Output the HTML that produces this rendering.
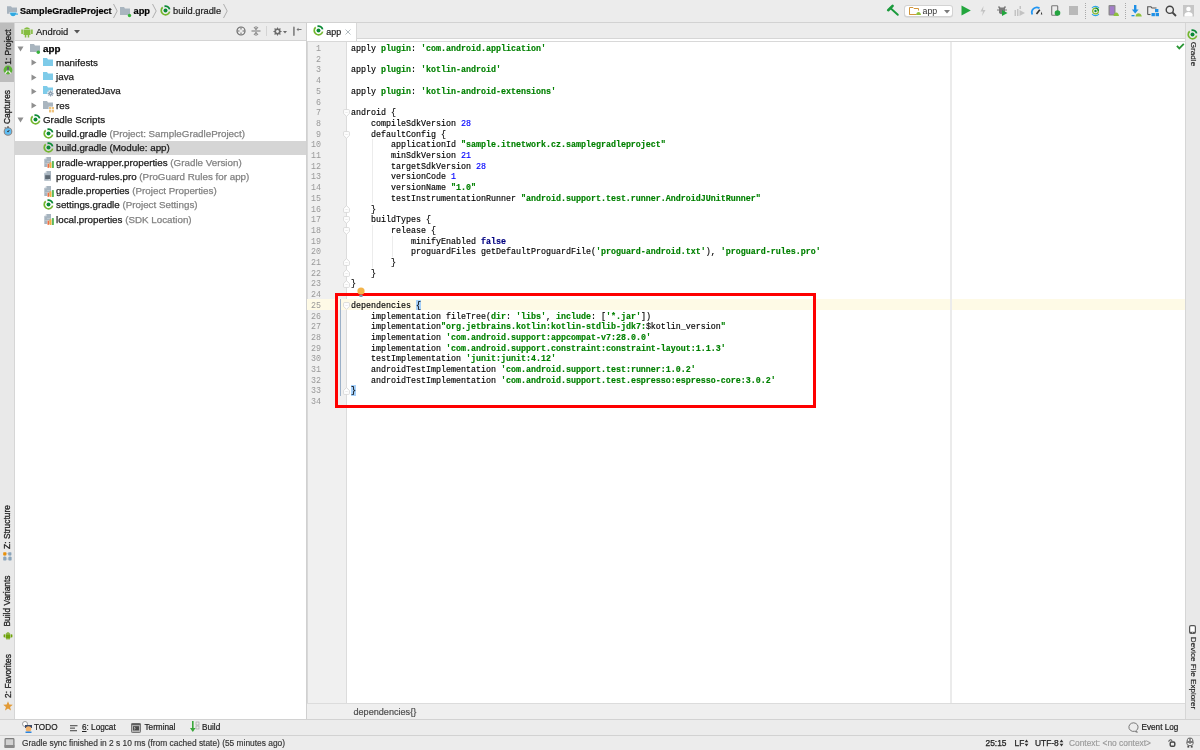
<!DOCTYPE html>
<html><head><meta charset="utf-8">
<style>
*{box-sizing:border-box}
html,body{margin:0;padding:0;width:1200px;height:750px;overflow:hidden;background:#ececec;font-family:"Liberation Sans",sans-serif;color:#1a1a1a}
.a{position:absolute}
svg{overflow:visible}
#top{left:0;top:0;width:1200px;height:23px;background:#ececec;border-bottom:1px solid #d2d2d2}
#lstrip{left:0;top:23px;width:15px;height:696px;background:#e9e9e9;border-right:1px solid #d6d6d6}
#rstrip{left:1185px;top:23px;width:15px;height:696px;background:#e9e9e9;border-left:1px solid #d6d6d6}
#proj{left:15px;top:23px;width:292px;height:696px;background:#fff;border-right:1px solid #d0d0d0}
#phdr{left:15px;top:23px;width:291px;height:18px;background:#ececec;border-bottom:1px solid #d4d4d4}
#tabs{left:307px;top:23px;width:878px;height:16px;background:#ececec;border-bottom:1px solid #d6d6d6}
#tabgap{left:307px;top:39px;width:878px;height:2px;background:#fff}
#editor{left:307px;top:41px;width:878px;height:662px;background:#fff;border-top:1px solid #d8d8d8}
#gutter{left:307px;top:42px;width:40px;height:661px;background:#f0f0f0;border-left:1px solid #d8d8d8;border-right:1px solid #dcdcdc}
#crumb{left:307px;top:703px;width:878px;height:16px;background:#efefef;border-top:1px solid #dcdcdc}
#bottom{left:0;top:719px;width:1200px;height:16px;background:#ececec;border-top:1px solid #d2d2d2}
#status{left:0;top:735px;width:1200px;height:15px;background:#ececec;border-top:1px solid #d2d2d2}
.code{font-family:"Liberation Mono",monospace;font-size:8.333px;white-space:pre;line-height:10.667px;color:#000;-webkit-text-stroke:0.15px currentColor}
.ln{left:307px;width:14px;text-align:right;color:#999;font-family:"Liberation Mono",monospace;font-size:8.333px;line-height:10.667px;white-space:pre}
.s{color:#008000;font-weight:bold}
.n{color:#0000ff}
.k{color:#000080;font-weight:bold}
.tb{font-size:9.3px;white-space:pre;line-height:12px;-webkit-text-stroke:0.2px currentColor}
.b{font-weight:bold}
.st{font-size:8.4px;white-space:pre;line-height:10px;color:#333;-webkit-text-stroke:0.15px currentColor}
.row{height:14px;font-size:9.8px;white-space:pre;line-height:14px;color:#1a1a1a;-webkit-text-stroke:0.25px currentColor}
.gr{color:#828282}
.blk{color:#000}
.vt{overflow:visible}
.vt span{position:absolute;left:50%;top:50%;transform:translate(-50%,-50%) rotate(-90deg);white-space:pre;font-size:8.4px;color:#1e1e1e;-webkit-text-stroke:0.3px #1e1e1e}
.vtr span{position:absolute;left:50%;top:50%;transform:translate(-50%,-50%) rotate(90deg);white-space:pre;font-size:8.4px;color:#1e1e1e;-webkit-text-stroke:0.15px #1e1e1e}
.br{}
</style></head><body>
<div id="wrap" style="position:absolute;left:0;top:0;width:1200px;height:750px;will-change:transform">
<div id="top" class="a"></div>
<div id="lstrip" class="a"></div>
<div id="proj" class="a"></div>
<div id="phdr" class="a"></div>
<div id="tabs" class="a"></div>
<div id="tabgap" class="a"></div>
<div id="editor" class="a"></div>
<div id="gutter" class="a"></div>
<div id="crumb" class="a"></div>
<div id="rstrip" class="a"></div>
<div id="bottom" class="a"></div>
<div id="status" class="a"></div>
<svg class="a" style="left:7px;top:6px" width="12" height="11" viewBox="0 0 12 11"><path d="M0 0.3 H4 L5 1.5 H10 V7.8 H0 Z" fill="#a7b3be"/><path d="M2.6 6 H9.6 Q9.6 10.6 6.1 10.6 Q2.6 10.6 2.6 6 Z" fill="#fff"/><path d="M3 6.4 H9.2 Q9.2 10.2 6.1 10.2 Q3 10.2 3 6.4 Z" fill="#2fa8e0"/><circle cx="10" cy="8.1" r="0.9" fill="#2fa8e0"/></svg>
<div class="a tb b" style="left:20px;top:4.6px;font-size:9.05px;color:#000">SampleGradleProject</div>
<svg class="a" style="left:113px;top:3px" width="5" height="16" viewBox="0 0 5 16"><path d="M0.5 1 L4.2 8 L0.5 15" fill="none" stroke="#a8a8a8" stroke-width="0.9"/></svg>
<svg class="a" style="left:120px;top:7px" width="12" height="10" viewBox="0 0 12 10">
<path d="M0 0 H4 L5 1.5 H10 V8 H0 Z" fill="#a9b5bf"/><circle cx="9.5" cy="8.5" r="1.7" fill="#36b33a"/></svg>
<div class="a tb b" style="left:133.5px;top:4.6px;color:#000">app</div>
<svg class="a" style="left:152px;top:3px" width="5" height="16" viewBox="0 0 5 16"><path d="M0.5 1 L4.2 8 L0.5 15" fill="none" stroke="#a8a8a8" stroke-width="0.9"/></svg>
<svg class="a" style="left:159.5px;top:5.1px" width="11" height="11" viewBox="0 0 11 11">
<path d="M4.46 1.33 A4.3 4.3 0 0 1 9.65 4.39" fill="none" stroke="#0b8a36" stroke-width="1.7"/>
<path d="M9.65 6.61 A4.3 4.3 0 1 1 2.68 2.25" fill="none" stroke="#72b62e" stroke-width="1.7"/>
<circle cx="5.5" cy="5.5" r="2" fill="#0b8a36"/></svg>
<div class="a tb" style="left:173px;top:4.6px">build.gradle</div>
<svg class="a" style="left:223px;top:3px" width="5" height="16" viewBox="0 0 5 16"><path d="M0.5 1 L4.2 8 L0.5 15" fill="none" stroke="#a8a8a8" stroke-width="0.9"/></svg>
<svg class="a" style="left:887px;top:5px" width="12" height="11" viewBox="0 0 12 11"><path d="M3.6 3.2 L10.8 9.8" stroke="#1b9a3c" stroke-width="1.9" stroke-linecap="round"/><path d="M1.2 5.2 L5.6 0.9" stroke="#1b9a3c" stroke-width="2.6" stroke-linecap="round"/></svg>
<div class="a" style="left:904px;top:4.5px;width:49px;height:12.5px;background:#fff;border:1px solid #d3d3d3;border-radius:3px;box-shadow:0 0.5px 0 #cfcfcf"></div>
<svg class="a" style="left:909px;top:7px" width="12" height="8" viewBox="0 0 12 8"><path d="M0.5 0.5 H4 L5 1.5 H9.5 V3.5 M7 7.5 H0.5 Z" fill="none" stroke="#d1953c" stroke-width="1"/><path d="M0.5 0.5 V7.5" stroke="#d1953c"/><path d="M7 8 Q7.5 5 9.5 5 Q11.5 5 12 8 Z" fill="#8ec13e"/></svg>
<div class="a tb" style="left:922.5px;top:5px;color:#333;font-size:8.8px;-webkit-text-stroke:0">app</div>
<svg class="a" style="left:943.5px;top:9.5px" width="6" height="4" viewBox="0 0 6 4"><path d="M0 0 H6 L3 3.5 Z" fill="#7b7b7b"/></svg>
<svg class="a" style="left:961px;top:5px" width="10" height="11" viewBox="0 0 10 11"><path d="M0.5 0.5 L9.8 5.5 L0.5 10.5 Z" fill="#22a63d"/></svg>
<svg class="a" style="left:980px;top:5.5px" width="6" height="10" viewBox="0 0 6 10"><path d="M3.5 0 L0.5 5.5 H3 L2 10 L5.5 4 H3 Z" fill="#c3c3c3"/></svg>
<svg class="a" style="left:997px;top:5px" width="11" height="11" viewBox="0 0 11 11"><path d="M2 1 L3.5 2.5 H6.5 L8 1 L9 2 L8 3.5 V8 Q5 10.5 2 8 V3.5 L1 2 Z" fill="#7b7b7b"/><rect x="0" y="4.5" width="10" height="1" fill="#7b7b7b"/><path d="M5 5 L10.5 8 L5 11 Z" fill="#22a63d"/></svg>
<svg class="a" style="left:1014px;top:5.5px" width="11" height="11" viewBox="0 0 11 11"><rect x="0.5" y="4" width="1.5" height="6" fill="#c3c3c3"/><rect x="3" y="3" width="1.5" height="7" fill="#c3c3c3"/><rect x="5.5" y="0" width="1.5" height="3" fill="#c3c3c3"/><path d="M5.5 4 L11 7 L5.5 10 Z" fill="#c3c3c3"/></svg>
<svg class="a" style="left:1031px;top:6px" width="12" height="9" viewBox="0 0 12 9"><path d="M1.3 8.5 A5 5 0 0 1 8.5 2.2" fill="none" stroke="#2196f3" stroke-width="1.8"/><path d="M5.5 8 L8.8 3.8" stroke="#333" stroke-width="1.6"/><path d="M10.5 5.5 L11.3 8.5 H9.8 Z" fill="#333"/></svg>
<svg class="a" style="left:1051px;top:5px" width="10" height="11" viewBox="0 0 10 11"><rect x="0.7" y="0.7" width="6" height="9.6" rx="0.8" fill="none" stroke="#777" stroke-width="1.1"/><circle cx="6.5" cy="8" r="2.8" fill="#23a43f"/></svg>
<div class="a" style="left:1069px;top:6px;width:8.5px;height:8.5px;background:#b9b9b9"></div>
<div class="a" style="left:1084.5px;top:3px;width:1px;height:16px;background:repeating-linear-gradient(#aaa 0 1px,transparent 1px 2.2px)"></div>
<svg class="a" style="left:1090px;top:4.5px" width="11" height="12" viewBox="0 0 22 24"><path d="M4 6 A9 9 0 0 1 18 6" fill="none" stroke="#2aa6e8" stroke-width="2.2"/><path d="M4 18 A9 9 0 0 0 18 18" fill="none" stroke="#2aa6e8" stroke-width="2.2"/><circle cx="11" cy="12" r="5.8" fill="none" stroke="#8ab92f" stroke-width="2.6"/><path d="M11 6.2 A5.8 5.8 0 0 1 16.8 12" fill="none" stroke="#12913e" stroke-width="2.6"/><circle cx="11" cy="12" r="2.4" fill="#12913e"/></svg>
<svg class="a" style="left:1107.5px;top:5px" width="11" height="11" viewBox="0 0 11 11"><rect x="0.5" y="0" width="7" height="10.5" rx="1" fill="#8a8a8a"/><rect x="1.8" y="1.3" width="4.5" height="8" fill="#a37cc9"/><path d="M5.5 11 Q6 7.5 8.2 7.5 Q10.5 7.5 11 11 Z" fill="#8ec13e"/></svg>
<div class="a" style="left:1124.5px;top:3px;width:1px;height:16px;background:repeating-linear-gradient(#aaa 0 1px,transparent 1px 2.2px)"></div>
<svg class="a" style="left:1130.5px;top:5px" width="11" height="12" viewBox="0 0 11 12"><rect x="3" y="0" width="2.4" height="5" fill="#1e90e6"/><path d="M0.8 4.5 H7.6 L4.2 8.5 Z" fill="#1e90e6"/><rect x="0.5" y="10" width="3" height="1.3" fill="#1e90e6"/><path d="M4.5 11.5 Q5 8.2 7.5 8.2 Q10 8.2 10.8 11.5 Z" fill="#8ec13e"/></svg>
<svg class="a" style="left:1147px;top:5.5px" width="13" height="11" viewBox="0 0 13 11"><path d="M0.7 8.5 V0.8 H4 L5 2 H9.5" fill="none" stroke="#555" stroke-width="1.1"/><path d="M0.7 8.5 H3.5" stroke="#555" stroke-width="1.1"/><rect x="8" y="3" width="3.4" height="3.2" fill="#1e90e6"/><rect x="4.5" y="7" width="3.4" height="3.2" fill="#1e90e6"/><rect x="8.6" y="7" width="3.4" height="3.2" fill="#1e90e6"/></svg>
<svg class="a" style="left:1165px;top:5px" width="12" height="12" viewBox="0 0 12 12"><circle cx="4.8" cy="4.8" r="3.6" fill="none" stroke="#444" stroke-width="1.4"/><path d="M7.5 7.5 L11 11" stroke="#444" stroke-width="1.8"/></svg>
<svg class="a" style="left:1183px;top:5px" width="11" height="12" viewBox="0 0 11 12"><rect width="11" height="11.5" fill="#c6c6c6"/><circle cx="5.5" cy="4" r="2.3" fill="#fff"/><path d="M1.5 11.5 V9.5 Q2 7 5.5 7 Q9 7 9.5 9.5 V11.5 Z" fill="#fff"/></svg>
<div class="a" style="left:0;top:23px;width:14px;height:59px;background:#bdbdbd"></div>
<div class="a vt" style="left:2.8px;top:28px;width:10px;height:38px"><span>1: Project</span></div>
<svg class="a" style="left:2.5px;top:64.5px" width="10" height="10" viewBox="0 0 10 10"><circle cx="5" cy="5" r="4.4" fill="#5cb335"/><path d="M2.2 8.6 L5 4.8 L7.8 8.6" stroke="#f2f2f2" stroke-width="1.1" fill="none"/><rect x="4.1" y="1.6" width="1.8" height="4.2" rx="0.9" fill="#5b5b6b"/></svg>
<div class="a vt" style="left:2.3px;top:88.6px;width:10px;height:36px"><span>Captures</span></div>
<svg class="a" style="left:2.5px;top:126px" width="10" height="10" viewBox="0 0 10 10"><circle cx="5" cy="5.5" r="3.8" fill="#5fbdf3" stroke="#8c8480" stroke-width="1.1"/><rect x="4.2" y="0.3" width="1.6" height="1.5" fill="#555"/><path d="M1 2.2 L2.3 1 L3 2" fill="#666"/><path d="M5 5.5 L6.5 4" stroke="#333" stroke-width="0.9"/><circle cx="5" cy="5.5" r="0.8" fill="#333"/></svg>
<div class="a vt" style="left:2px;top:505px;width:10px;height:44px"><span>Z: Structure</span></div>
<svg class="a" style="left:3px;top:551.5px" width="9" height="9" viewBox="0 0 9 9"><path d="M1.7 1.7 H7 M1.7 1.7 V7 M7 1.7 V7 M1.7 7 H7" stroke="#b9c8d5" stroke-width="0.8"/><rect x="0.2" y="0.2" width="3.2" height="3.2" rx="0.6" fill="#e8900a"/><rect x="5.2" y="0.2" width="3.2" height="3.2" rx="0.6" fill="#8aa4ba"/><rect x="0.2" y="4.8" width="3.2" height="3.6" rx="0.6" fill="#8aa4ba"/><rect x="5.4" y="4.8" width="3.2" height="3.6" rx="0.6" fill="#8aa4ba"/></svg>
<div class="a vt" style="left:2px;top:576px;width:10px;height:50px"><span>Build Variants</span></div>
<svg class="a" style="left:2.5px;top:629.5px" width="10" height="10" viewBox="0 0 10 10"><path d="M2.6 3.8 Q5 0.6 7.4 3.8 Z" fill="#6fa30a"/><rect x="2.6" y="4.2" width="4.8" height="4" fill="#6fa30a"/><rect x="0.6" y="4.2" width="1.5" height="3.2" rx="0.7" fill="#6fa30a"/><rect x="7.9" y="4.2" width="1.5" height="3.2" rx="0.7" fill="#6fa30a"/><rect x="3.3" y="7.5" width="1.4" height="2" rx="0.6" fill="#6fa30a"/><rect x="5.3" y="7.5" width="1.4" height="2" rx="0.6" fill="#6fa30a"/></svg>
<div class="a vt" style="left:2.5px;top:655px;width:10px;height:42px"><span>2: Favorites</span></div>
<svg class="a" style="left:2.5px;top:700.5px" width="10" height="10" viewBox="0 0 10 10"><path d="M5 0.3 L6.3 3.6 L9.8 3.8 L7.1 6 L8 9.5 L5 7.5 L2 9.5 L2.9 6 L0.2 3.8 L3.7 3.6 Z" fill="#e29a35"/></svg>
<svg class="a" style="left:21px;top:25px" width="12" height="13" viewBox="0 0 12 13"><path d="M2.5 4.5 H9.5 V10 H2.5 Z M2.8 4 Q6 0.5 9.2 4 Z" fill="#84bd3f"/><rect x="0.3" y="4.5" width="1.6" height="4.5" fill="#84bd3f"/><rect x="10.1" y="4.5" width="1.6" height="4.5" fill="#84bd3f"/><rect x="3.8" y="9.5" width="1.5" height="3" fill="#84bd3f"/><rect x="6.7" y="9.5" width="1.5" height="3" fill="#84bd3f"/></svg>
<div class="a tb" style="left:36px;top:26px;font-size:9.4px;color:#222">Android</div>
<svg class="a" style="left:73.5px;top:30px" width="6" height="4" viewBox="0 0 6 4"><path d="M0 0 H6 L3 3.5 Z" fill="#555"/></svg>
<svg class="a" style="left:235.5px;top:26px" width="10" height="10" viewBox="0 0 10 10"><circle cx="5" cy="5" r="4" fill="none" stroke="#6d6d6d" stroke-width="1.2"/><path d="M5 1.5 V3.5 M5 6.5 V8.5 M1.5 5 H3.5 M6.5 5 H8.5" stroke="#6d6d6d" stroke-width="1"/></svg>
<svg class="a" style="left:251px;top:26px" width="10" height="10" viewBox="0 0 10 10"><path d="M0.5 5 H9.5" stroke="#8a8a8a" stroke-width="1.2"/><path d="M3 1 L5 3.5 L7 1 M3 9 L5 6.5 L7 9" stroke="#8a8a8a" stroke-width="1.1" fill="none"/><path d="M5 0 V3 M5 7 V10" stroke="#8a8a8a" stroke-width="1"/></svg>
<div class="a" style="left:266px;top:26px;width:1px;height:10px;background:#d4d4d4"></div>
<svg class="a" style="left:272.5px;top:26.5px" width="9" height="9" viewBox="0 0 10 10"><path d="M5 0 L6 2 L8.5 1.5 L8 4 L10 5 L8 6 L8.5 8.5 L6 8 L5 10 L4 8 L1.5 8.5 L2 6 L0 5 L2 4 L1.5 1.5 L4 2 Z" fill="#6a6a6a"/><circle cx="5" cy="5" r="1.6" fill="#ececec"/></svg>
<svg class="a" style="left:283px;top:30.5px" width="4" height="3" viewBox="0 0 4 3"><path d="M0 0 H4 L2 2.5 Z" fill="#6a6a6a"/></svg>
<svg class="a" style="left:291.5px;top:26px" width="10" height="11" viewBox="0 0 10 11"><rect x="1" y="0.5" width="1.8" height="9.5" rx="0.9" fill="#8a8a8a"/><path d="M4.5 3.5 L6.5 1.8 V5.2 Z" fill="#777"/><rect x="6" y="3" width="3.5" height="1" fill="#777"/></svg>
<div class="a" style="left:15px;top:140.75px;width:291px;height:14px;background:#d5d5d5"></div>
<svg class="a" style="left:17px;top:45.5px" width="7" height="6" viewBox="0 0 7 6"><path d="M0.5 0.5 H6.5 L3.5 5.5 Z" fill="#8f8f8f"/></svg>
<svg class="a" style="left:30px;top:44.0px" width="12" height="10" viewBox="0 0 12 10">
<path d="M0 0 H4 L5 1.5 H10 V8 H0 Z" fill="#a9b5bf"/><circle cx="8.3" cy="8.2" r="1.7" fill="#36b33a"/></svg>
<div class="a row b blk" style="left:43px;top:41.50px">app<span class="gr"></span></div>
<svg class="a" style="left:30.5px;top:59.45px" width="6" height="7" viewBox="0 0 6 7"><path d="M0.5 0.5 V6.5 L5.5 3.5 Z" fill="#8f8f8f"/></svg>
<svg class="a" style="left:43px;top:57.85px" width="12" height="10" viewBox="0 0 12 10">
<path d="M0 0 H4 L5 1.5 H10 V8 H0 Z" fill="#7ecbe9"/></svg>
<div class="a row" style="left:56px;top:55.75px">manifests<span class="gr"></span></div>
<svg class="a" style="left:30.5px;top:73.7px" width="6" height="7" viewBox="0 0 6 7"><path d="M0.5 0.5 V6.5 L5.5 3.5 Z" fill="#8f8f8f"/></svg>
<svg class="a" style="left:43px;top:72.1px" width="12" height="10" viewBox="0 0 12 10">
<path d="M0 0 H4 L5 1.5 H10 V8 H0 Z" fill="#7ecbe9"/></svg>
<div class="a row" style="left:56px;top:70.00px">java<span class="gr"></span></div>
<svg class="a" style="left:30.5px;top:87.95px" width="6" height="7" viewBox="0 0 6 7"><path d="M0.5 0.5 V6.5 L5.5 3.5 Z" fill="#8f8f8f"/></svg>
<svg class="a" style="left:43px;top:86.25px" width="12" height="10" viewBox="0 0 12 10">
<path d="M0 0 H4 L5 1.5 H10 V8 H0 Z" fill="#7ecbe9"/><circle cx="7.6" cy="7.6" r="3.4" fill="#fff"/><path d="M7.6 4.6 V10.6 M4.6 7.6 H10.6 M5.5 5.5 L9.7 9.7 M9.7 5.5 L5.5 9.7" stroke="#8fa3b5" stroke-width="1.1"/><circle cx="7.6" cy="7.6" r="1.7" fill="#8fa3b5"/><circle cx="7.6" cy="7.6" r="0.7" fill="#dde6ee"/></svg>
<div class="a row" style="left:56px;top:84.25px">generatedJava<span class="gr"></span></div>
<svg class="a" style="left:30.5px;top:102.2px" width="6" height="7" viewBox="0 0 6 7"><path d="M0.5 0.5 V6.5 L5.5 3.5 Z" fill="#8f8f8f"/></svg>
<svg class="a" style="left:43px;top:100.5px" width="12" height="10" viewBox="0 0 12 10">
<path d="M0 0 H4 L5 1.5 H10 V8 H0 Z" fill="#a9b5bf"/><rect x="5.6" y="5.6" width="5.6" height="6" fill="#fff"/><rect x="6" y="6" width="2.2" height="2.4" fill="#efc27c"/><rect x="8.8" y="6" width="2.2" height="2.4" fill="#efc27c"/><rect x="6" y="9" width="2.2" height="2.4" fill="#efc27c"/><rect x="8.8" y="9" width="2.2" height="2.4" fill="#efc27c"/></svg>
<div class="a row" style="left:56px;top:98.50px">res<span class="gr"></span></div>
<svg class="a" style="left:17px;top:116.75px" width="7" height="6" viewBox="0 0 7 6"><path d="M0.5 0.5 H6.5 L3.5 5.5 Z" fill="#8f8f8f"/></svg>
<svg class="a" style="left:29.5px;top:113.75px" width="11" height="11" viewBox="0 0 11 11">
<path d="M4.46 1.33 A4.3 4.3 0 0 1 9.65 4.39" fill="none" stroke="#0b8a36" stroke-width="1.7"/>
<path d="M9.65 6.61 A4.3 4.3 0 1 1 2.68 2.25" fill="none" stroke="#72b62e" stroke-width="1.7"/>
<circle cx="5.5" cy="5.5" r="2" fill="#0b8a36"/></svg>
<div class="a row" style="left:43px;top:112.75px">Gradle Scripts<span class="gr"></span></div>
<svg class="a" style="left:42.5px;top:128.0px" width="11" height="11" viewBox="0 0 11 11">
<path d="M4.46 1.33 A4.3 4.3 0 0 1 9.65 4.39" fill="none" stroke="#0b8a36" stroke-width="1.7"/>
<path d="M9.65 6.61 A4.3 4.3 0 1 1 2.68 2.25" fill="none" stroke="#72b62e" stroke-width="1.7"/>
<circle cx="5.5" cy="5.5" r="2" fill="#0b8a36"/></svg>
<div class="a row" style="left:56px;top:127.00px">build.gradle<span class="gr"> (Project: SampleGradleProject)</span></div>
<svg class="a" style="left:42.5px;top:142.25px" width="11" height="11" viewBox="0 0 11 11">
<path d="M4.46 1.33 A4.3 4.3 0 0 1 9.65 4.39" fill="none" stroke="#0b8a36" stroke-width="1.7"/>
<path d="M9.65 6.61 A4.3 4.3 0 1 1 2.68 2.25" fill="none" stroke="#72b62e" stroke-width="1.7"/>
<circle cx="5.5" cy="5.5" r="2" fill="#0b8a36"/></svg>
<div class="a row" style="left:56px;top:141.25px">build.gradle (Module: app)<span class="gr"></span></div>
<svg class="a" style="left:44.1px;top:157.0px" width="11" height="12" viewBox="0 0 11 12">
<path d="M0.3 2.2 L2.5 0 H7 V10 H0.3 Z" fill="#a7b4bf"/><path d="M0.3 2.2 H2.5 V0 Z" fill="#e4e8ec"/>
<rect x="3" y="4" width="3.5" height="0.6" fill="#c9d2d9"/><rect x="1.2" y="6" width="3" height="0.6" fill="#c9d2d9"/>
<rect x="3.4" y="6.6" width="1.8" height="4.4" rx="0.5" fill="#f05a28" stroke="#fff" stroke-width="0.4"/><rect x="5.6" y="5.3" width="1.9" height="5.7" rx="0.5" fill="#f8b140"/><rect x="7.9" y="3.9" width="2" height="7.1" rx="0.5" fill="#5cb85c"/></svg>
<div class="a row" style="left:56px;top:155.50px">gradle-wrapper.properties<span class="gr"> (Gradle Version)</span></div>
<svg class="a" style="left:44.1px;top:171.25px" width="11" height="12" viewBox="0 0 11 12">
<path d="M0.3 2.2 L2.5 0 H7 V9.8 H0.3 Z" fill="#a7b4bf"/><path d="M0.3 2.2 H2.5 V0 Z" fill="#e4e8ec"/>
<rect x="1.2" y="4.2" width="5" height="3.8" fill="#5d6872"/><rect x="4.5" y="8.3" width="1.5" height="0.9" fill="#e6e6e6"/></svg>
<div class="a row" style="left:56px;top:169.75px">proguard-rules.pro<span class="gr"> (ProGuard Rules for app)</span></div>
<svg class="a" style="left:44.1px;top:185.5px" width="11" height="12" viewBox="0 0 11 12">
<path d="M0.3 2.2 L2.5 0 H7 V10 H0.3 Z" fill="#a7b4bf"/><path d="M0.3 2.2 H2.5 V0 Z" fill="#e4e8ec"/>
<rect x="3" y="4" width="3.5" height="0.6" fill="#c9d2d9"/><rect x="1.2" y="6" width="3" height="0.6" fill="#c9d2d9"/>
<rect x="3.4" y="6.6" width="1.8" height="4.4" rx="0.5" fill="#f05a28" stroke="#fff" stroke-width="0.4"/><rect x="5.6" y="5.3" width="1.9" height="5.7" rx="0.5" fill="#f8b140"/><rect x="7.9" y="3.9" width="2" height="7.1" rx="0.5" fill="#5cb85c"/></svg>
<div class="a row" style="left:56px;top:184.00px">gradle.properties<span class="gr"> (Project Properties)</span></div>
<svg class="a" style="left:42.5px;top:199.25px" width="11" height="11" viewBox="0 0 11 11">
<path d="M4.46 1.33 A4.3 4.3 0 0 1 9.65 4.39" fill="none" stroke="#0b8a36" stroke-width="1.7"/>
<path d="M9.65 6.61 A4.3 4.3 0 1 1 2.68 2.25" fill="none" stroke="#72b62e" stroke-width="1.7"/>
<circle cx="5.5" cy="5.5" r="2" fill="#0b8a36"/></svg>
<div class="a row" style="left:56px;top:198.25px">settings.gradle<span class="gr"> (Project Settings)</span></div>
<svg class="a" style="left:44.1px;top:214.0px" width="11" height="12" viewBox="0 0 11 12">
<path d="M0.3 2.2 L2.5 0 H7 V10 H0.3 Z" fill="#a7b4bf"/><path d="M0.3 2.2 H2.5 V0 Z" fill="#e4e8ec"/>
<rect x="3" y="4" width="3.5" height="0.6" fill="#c9d2d9"/><rect x="1.2" y="6" width="3" height="0.6" fill="#c9d2d9"/>
<rect x="3.4" y="6.6" width="1.8" height="4.4" rx="0.5" fill="#f05a28" stroke="#fff" stroke-width="0.4"/><rect x="5.6" y="5.3" width="1.9" height="5.7" rx="0.5" fill="#f8b140"/><rect x="7.9" y="3.9" width="2" height="7.1" rx="0.5" fill="#5cb85c"/></svg>
<div class="a row" style="left:56px;top:212.50px">local.properties<span class="gr"> (SDK Location)</span></div>
<div class="a" style="left:307px;top:23px;width:50px;height:18px;background:#fff;border-right:1px solid #d8d8d8"></div>
<svg class="a" style="left:313.0px;top:25.0px" width="11" height="11" viewBox="0 0 11 11">
<path d="M4.46 1.33 A4.3 4.3 0 0 1 9.65 4.39" fill="none" stroke="#0b8a36" stroke-width="1.7"/>
<path d="M9.65 6.61 A4.3 4.3 0 1 1 2.68 2.25" fill="none" stroke="#72b62e" stroke-width="1.7"/>
<circle cx="5.5" cy="5.5" r="2" fill="#0b8a36"/></svg>
<div class="a tb" style="left:326.3px;top:25.8px;color:#222;font-size:8.9px">app</div>
<svg class="a" style="left:345px;top:28.5px" width="6" height="6" viewBox="0 0 6 6"><path d="M0.5 0.5 L5.5 5.5 M5.5 0.5 L0.5 5.5" stroke="#aab4ba" stroke-width="0.9"/></svg>
<div class="a" style="left:307px;top:298.9px;width:878px;height:11px;background:#fefae6"></div>
<div class="a" style="left:416px;top:299.70px;width:5px;height:10.70px;background:#a6d1fb"></div>
<div class="a" style="left:351px;top:385.30px;width:5px;height:10.70px;background:#a6d1fb"></div>
<div class="a" style="left:950.4px;top:42px;width:1.2px;height:661px;background:#ebebeb"></div>
<div class="a ln" style="top:44.00px">1</div>
<div class="a ln" style="top:54.70px">2</div>
<div class="a ln" style="top:65.40px">3</div>
<div class="a ln" style="top:76.10px">4</div>
<div class="a ln" style="top:86.80px">5</div>
<div class="a ln" style="top:97.50px">6</div>
<div class="a ln" style="top:108.20px">7</div>
<div class="a ln" style="top:118.90px">8</div>
<div class="a ln" style="top:129.60px">9</div>
<div class="a ln" style="top:140.30px">10</div>
<div class="a ln" style="top:151.00px">11</div>
<div class="a ln" style="top:161.70px">12</div>
<div class="a ln" style="top:172.40px">13</div>
<div class="a ln" style="top:183.10px">14</div>
<div class="a ln" style="top:193.80px">15</div>
<div class="a ln" style="top:204.50px">16</div>
<div class="a ln" style="top:215.20px">17</div>
<div class="a ln" style="top:225.90px">18</div>
<div class="a ln" style="top:236.60px">19</div>
<div class="a ln" style="top:247.30px">20</div>
<div class="a ln" style="top:258.00px">21</div>
<div class="a ln" style="top:268.70px">22</div>
<div class="a ln" style="top:279.40px">23</div>
<div class="a ln" style="top:290.10px">24</div>
<div class="a ln" style="top:300.80px">25</div>
<div class="a ln" style="top:311.50px">26</div>
<div class="a ln" style="top:322.20px">27</div>
<div class="a ln" style="top:332.90px">28</div>
<div class="a ln" style="top:343.60px">29</div>
<div class="a ln" style="top:354.30px">30</div>
<div class="a ln" style="top:365.00px">31</div>
<div class="a ln" style="top:375.70px">32</div>
<div class="a ln" style="top:386.40px">33</div>
<div class="a ln" style="top:397.10px">34</div>
<div class="a code" style="left:351px;top:44.00px">apply <span class="s">plugin</span>: <span class="s">'com.android.application'</span></div>
<div class="a code" style="left:351px;top:54.70px"></div>
<div class="a code" style="left:351px;top:65.40px">apply <span class="s">plugin</span>: <span class="s">'kotlin-android'</span></div>
<div class="a code" style="left:351px;top:76.10px"></div>
<div class="a code" style="left:351px;top:86.80px">apply <span class="s">plugin</span>: <span class="s">'kotlin-android-extensions'</span></div>
<div class="a code" style="left:351px;top:97.50px"></div>
<div class="a code" style="left:351px;top:108.20px">android {</div>
<div class="a code" style="left:351px;top:118.90px">    compileSdkVersion <span class="n">28</span></div>
<div class="a code" style="left:351px;top:129.60px">    defaultConfig {</div>
<div class="a code" style="left:351px;top:140.30px">        applicationId <span class="s">"sample.itnetwork.cz.samplegradleproject"</span></div>
<div class="a code" style="left:351px;top:151.00px">        minSdkVersion <span class="n">21</span></div>
<div class="a code" style="left:351px;top:161.70px">        targetSdkVersion <span class="n">28</span></div>
<div class="a code" style="left:351px;top:172.40px">        versionCode <span class="n">1</span></div>
<div class="a code" style="left:351px;top:183.10px">        versionName <span class="s">"1.0"</span></div>
<div class="a code" style="left:351px;top:193.80px">        testInstrumentationRunner <span class="s">"android.support.test.runner.AndroidJUnitRunner"</span></div>
<div class="a code" style="left:351px;top:204.50px">    }</div>
<div class="a code" style="left:351px;top:215.20px">    buildTypes {</div>
<div class="a code" style="left:351px;top:225.90px">        release {</div>
<div class="a code" style="left:351px;top:236.60px">            minifyEnabled <span class="k">false</span></div>
<div class="a code" style="left:351px;top:247.30px">            proguardFiles getDefaultProguardFile(<span class="s">'proguard-android.txt'</span>), <span class="s">'proguard-rules.pro'</span></div>
<div class="a code" style="left:351px;top:258.00px">        }</div>
<div class="a code" style="left:351px;top:268.70px">    }</div>
<div class="a code" style="left:351px;top:279.40px">}</div>
<div class="a code" style="left:351px;top:290.10px"></div>
<div class="a code" style="left:351px;top:300.80px">dependencies <span class="br">{</span></div>
<div class="a code" style="left:351px;top:311.50px">    implementation fileTree(<span class="s">dir</span>: <span class="s">'libs'</span>, <span class="s">include</span>: [<span class="s">'*.jar'</span>])</div>
<div class="a code" style="left:351px;top:322.20px">    implementation<span class="s">"org.jetbrains.kotlin:kotlin-stdlib-jdk7:</span>$kotlin_version<span class="s">"</span></div>
<div class="a code" style="left:351px;top:332.90px">    implementation <span class="s">'com.android.support:appcompat-v7:28.0.0'</span></div>
<div class="a code" style="left:351px;top:343.60px">    implementation <span class="s">'com.android.support.constraint:constraint-layout:1.1.3'</span></div>
<div class="a code" style="left:351px;top:354.30px">    testImplementation <span class="s">'junit:junit:4.12'</span></div>
<div class="a code" style="left:351px;top:365.00px">    androidTestImplementation <span class="s">'com.android.support.test:runner:1.0.2'</span></div>
<div class="a code" style="left:351px;top:375.70px">    androidTestImplementation <span class="s">'com.android.support.test.espresso:espresso-core:3.0.2'</span></div>
<div class="a code" style="left:351px;top:386.40px"><span class="br">}</span></div>
<div class="a code" style="left:351px;top:397.10px"></div>
<div class="a" style="left:335px;top:293px;width:481px;height:115px;border:3px solid #fe0000"></div>
<div class="a" style="left:340px;top:298.9px;width:1px;height:96.7px;background:#9bb0c8"></div>
<svg class="a" style="left:343px;top:109.40px" width="7" height="8" viewBox="0 0 7 8"><path d="M0.6 1.4 Q0.6 0.6 1.4 0.6 H5.6 Q6.4 0.6 6.4 1.4 V4.4 L3.5 7.4 L0.6 4.4 Z" fill="#fff" stroke="#d2d2d2" stroke-width="0.8"/><path d="M2.3 3.4 H4.7" stroke="#dadada" stroke-width="0.6"/></svg>
<svg class="a" style="left:343px;top:130.80px" width="7" height="8" viewBox="0 0 7 8"><path d="M0.6 1.4 Q0.6 0.6 1.4 0.6 H5.6 Q6.4 0.6 6.4 1.4 V4.4 L3.5 7.4 L0.6 4.4 Z" fill="#fff" stroke="#d2d2d2" stroke-width="0.8"/><path d="M2.3 3.4 H4.7" stroke="#dadada" stroke-width="0.6"/></svg>
<svg class="a" style="left:343px;top:204.80px" width="7" height="8" viewBox="0 0 7 8"><path d="M0.6 6.6 V3.6 L3.5 0.6 L6.4 3.6 V6.6 Q6.4 7.4 5.6 7.4 H1.4 Q0.6 7.4 0.6 6.6 Z" fill="#fff" stroke="#d2d2d2" stroke-width="0.8"/><path d="M2.3 4.6 H4.7" stroke="#dadada" stroke-width="0.6"/></svg>
<svg class="a" style="left:343px;top:216.40px" width="7" height="8" viewBox="0 0 7 8"><path d="M0.6 1.4 Q0.6 0.6 1.4 0.6 H5.6 Q6.4 0.6 6.4 1.4 V4.4 L3.5 7.4 L0.6 4.4 Z" fill="#fff" stroke="#d2d2d2" stroke-width="0.8"/><path d="M2.3 3.4 H4.7" stroke="#dadada" stroke-width="0.6"/></svg>
<svg class="a" style="left:343px;top:227.10px" width="7" height="8" viewBox="0 0 7 8"><path d="M0.6 1.4 Q0.6 0.6 1.4 0.6 H5.6 Q6.4 0.6 6.4 1.4 V4.4 L3.5 7.4 L0.6 4.4 Z" fill="#fff" stroke="#d2d2d2" stroke-width="0.8"/><path d="M2.3 3.4 H4.7" stroke="#dadada" stroke-width="0.6"/></svg>
<svg class="a" style="left:343px;top:258.30px" width="7" height="8" viewBox="0 0 7 8"><path d="M0.6 6.6 V3.6 L3.5 0.6 L6.4 3.6 V6.6 Q6.4 7.4 5.6 7.4 H1.4 Q0.6 7.4 0.6 6.6 Z" fill="#fff" stroke="#d2d2d2" stroke-width="0.8"/><path d="M2.3 4.6 H4.7" stroke="#dadada" stroke-width="0.6"/></svg>
<svg class="a" style="left:343px;top:269.00px" width="7" height="8" viewBox="0 0 7 8"><path d="M0.6 6.6 V3.6 L3.5 0.6 L6.4 3.6 V6.6 Q6.4 7.4 5.6 7.4 H1.4 Q0.6 7.4 0.6 6.6 Z" fill="#fff" stroke="#d2d2d2" stroke-width="0.8"/><path d="M2.3 4.6 H4.7" stroke="#dadada" stroke-width="0.6"/></svg>
<svg class="a" style="left:343px;top:279.70px" width="7" height="8" viewBox="0 0 7 8"><path d="M0.6 6.6 V3.6 L3.5 0.6 L6.4 3.6 V6.6 Q6.4 7.4 5.6 7.4 H1.4 Q0.6 7.4 0.6 6.6 Z" fill="#fff" stroke="#d2d2d2" stroke-width="0.8"/><path d="M2.3 4.6 H4.7" stroke="#dadada" stroke-width="0.6"/></svg>
<svg class="a" style="left:343px;top:302.00px" width="7" height="8" viewBox="0 0 7 8"><path d="M0.6 1.4 Q0.6 0.6 1.4 0.6 H5.6 Q6.4 0.6 6.4 1.4 V4.4 L3.5 7.4 L0.6 4.4 Z" fill="#fff" stroke="#d2d2d2" stroke-width="0.8"/><path d="M2.3 3.4 H4.7" stroke="#dadada" stroke-width="0.6"/></svg>
<svg class="a" style="left:343px;top:386.70px" width="7" height="8" viewBox="0 0 7 8"><path d="M0.6 6.6 V3.6 L3.5 0.6 L6.4 3.6 V6.6 Q6.4 7.4 5.6 7.4 H1.4 Q0.6 7.4 0.6 6.6 Z" fill="#fff" stroke="#d2d2d2" stroke-width="0.8"/><path d="M2.3 4.6 H4.7" stroke="#dadada" stroke-width="0.6"/></svg>
<div class="a" style="left:371.5px;top:139.20px;width:1px;height:64.20px;background:#ececec"></div>
<div class="a" style="left:371.5px;top:224.80px;width:1px;height:42.80px;background:#ececec"></div>
<div class="a" style="left:391.5px;top:235.50px;width:1px;height:21.40px;background:#ececec"></div>
<svg class="a" style="left:357px;top:287px" width="8" height="11" viewBox="0 0 8 11"><circle cx="4" cy="4" r="3.6" fill="#f3b44a"/><rect x="2.3" y="7.8" width="3.4" height="2.2" rx="0.8" fill="#7f95ab"/></svg>
<div class="a tb" style="left:353.5px;top:705.6px;color:#4f4f4f;font-size:9.1px">dependencies{}</div>
<svg class="a" style="left:1186.5px;top:28.5px" width="11" height="11" viewBox="0 0 11 11">
<path d="M4.46 1.33 A4.3 4.3 0 0 1 9.65 4.39" fill="none" stroke="#0b8a36" stroke-width="1.7"/>
<path d="M9.65 6.61 A4.3 4.3 0 1 1 2.68 2.25" fill="none" stroke="#72b62e" stroke-width="1.7"/>
<circle cx="5.5" cy="5.5" r="2" fill="#0b8a36"/></svg>
<div class="a vtr" style="left:1187px;top:41px;width:11px;height:26px"><span style="font-size:8.1px">Gradle</span></div>
<svg class="a" style="left:1175.5px;top:42.5px" width="9" height="7" viewBox="0 0 9 7"><path d="M0.9 2.9 L3.3 5.4 L7.8 0.9" fill="none" stroke="#2a9634" stroke-width="1.8"/></svg>
<svg class="a" style="left:1189px;top:625px" width="7" height="9" viewBox="0 0 7 9"><rect x="0.6" y="0.6" width="5.8" height="7.8" rx="1.4" fill="#fff" stroke="#555" stroke-width="1.2"/><rect x="1" y="6.8" width="5" height="1.4" fill="#555"/><rect x="3.1" y="6.6" width="0.8" height="1.6" fill="#bbb"/></svg>
<div class="a vtr" style="left:1187px;top:636px;width:11px;height:74px"><span style="font-size:8.1px">Device File Explorer</span></div>
<svg class="a" style="left:22px;top:721px" width="11" height="12" viewBox="0 0 11 12"><circle cx="3" cy="3" r="2.5" fill="#fff" stroke="#888" stroke-width="0.8"/><rect x="3" y="4" width="7" height="3" fill="#3a4a6a"/><circle cx="6.5" cy="8" r="2.8" fill="#f3b26a"/><rect x="3.5" y="10.5" width="6" height="1.5" fill="#2e86de"/></svg>
<div class="a tb" style="left:34px;top:722px;color:#222;font-size:8.2px">TODO</div>
<svg class="a" style="left:70px;top:724px" width="8" height="8" viewBox="0 0 8 8"><rect x="0" y="1" width="7.5" height="1.3" fill="#666"/><rect x="0" y="3.5" width="5" height="1.3" fill="#666"/><rect x="0" y="6" width="7" height="1.3" fill="#666"/></svg>
<div class="a tb" style="left:82px;top:722px;color:#222;font-size:8.2px"><u>6</u>: Logcat</div>
<svg class="a" style="left:131px;top:722.5px" width="10" height="10" viewBox="0 0 10 10"><rect x="0.5" y="0.5" width="9" height="9" rx="0.8" fill="#b5b5b5" stroke="#6a6a6a" stroke-width="0.9"/><rect x="0.5" y="0.5" width="9" height="1.6" fill="#5d5d5d"/><rect x="2" y="3.2" width="6" height="4.2" fill="#4a4a4a"/><path d="M3 4.2 L4.3 5.3 L3 6.4" stroke="#eee" stroke-width="0.7" fill="none"/></svg>
<div class="a tb" style="left:144.5px;top:722px;color:#222;font-size:8.2px">Terminal</div>
<svg class="a" style="left:190px;top:721px" width="10" height="12" viewBox="0 0 10 12"><rect x="2" y="0" width="1.6" height="8" fill="#3aa63a"/><path d="M0 7 H5.6 L2.8 11 Z" fill="#3aa63a"/><rect x="6" y="1" width="3" height="3" fill="none" stroke="#999" stroke-width="0.6"/><rect x="6" y="5" width="3" height="3" fill="none" stroke="#999" stroke-width="0.6"/></svg>
<div class="a tb" style="left:202px;top:722px;color:#222;font-size:8.2px">Build</div>
<svg class="a" style="left:1127px;top:721.5px" width="12" height="11" viewBox="0 0 12 11"><path d="M9.2 8.6 A4.6 4.3 0 1 0 7.6 9.3 L10.3 10.3 Z" fill="none" stroke="#6a6a6a" stroke-width="0.9" stroke-linejoin="round"/></svg>
<div class="a tb" style="left:1141.5px;top:722px;color:#222;font-size:8.2px">Event Log</div>
<svg class="a" style="left:3.5px;top:737.5px" width="11" height="10" viewBox="0 0 10 10"><rect x="0.6" y="0.6" width="8.8" height="8.8" rx="0.8" fill="#d2d2d2" stroke="#7d7d7d" stroke-width="1.2"/><rect x="0" y="7" width="10" height="3" rx="0.6" fill="#8a8a8a"/></svg>
<div class="a st" style="left:22px;top:737.5px">Gradle sync finished in 2 s 10 ms (from cached state) (55 minutes ago)</div>
<div class="a st" style="left:985.5px;top:737.5px;color:#222;-webkit-text-stroke:0.25px #222">25:15</div>
<div class="a st" style="left:1014.5px;top:737.5px;color:#222;-webkit-text-stroke:0.25px #222">LF</div>
<svg class="a" style="left:1024.2px;top:739.3px" width="5" height="8" viewBox="0 0 5 8"><path d="M0.6 3.2 L2.5 0.6 L4.4 3.2 Z M0.6 4.8 L2.5 7.4 L4.4 4.8 Z" fill="#333"/></svg>
<div class="a st" style="left:1035px;top:737.5px;color:#222;-webkit-text-stroke:0.25px #222">UTF-8</div>
<svg class="a" style="left:1059.2px;top:739.3px" width="5" height="8" viewBox="0 0 5 8"><path d="M0.6 3.2 L2.5 0.6 L4.4 3.2 Z M0.6 4.8 L2.5 7.4 L4.4 4.8 Z" fill="#333"/></svg>
<div class="a st" style="left:1069px;top:737.5px;color:#999">Context: &lt;no context&gt;</div>
<svg class="a" style="left:1168px;top:739px" width="9" height="8" viewBox="0 0 9 8"><path d="M0.7 2.8 Q0.9 0.6 2.7 0.7 Q3.8 0.8 4 1.9" stroke="#555" stroke-width="1.1" fill="none"/><rect x="2.2" y="3" width="4.6" height="4.2" rx="1.3" fill="none" stroke="#444" stroke-width="1.4"/></svg>
<svg class="a" style="left:1186px;top:737px" width="8" height="11" viewBox="0 0 8 11"><path d="M0.4 5.6 Q0.4 0.4 4 0.4 Q7.6 0.4 7.6 5.6 Z" fill="#7a7a7a"/><ellipse cx="2.6" cy="3" rx="0.7" ry="1" fill="#fff"/><ellipse cx="5.4" cy="3" rx="0.7" ry="1" fill="#fff"/><path d="M0.6 5.6 H7.4 Q7.4 8.6 4 8.6 Q0.6 8.6 0.6 5.6 Z" fill="#fff" stroke="#666" stroke-width="0.9"/><ellipse cx="4" cy="6.6" rx="1" ry="0.5" fill="#888"/><rect x="1.4" y="8.6" width="1.8" height="2" fill="#4a4a4a"/><rect x="4.8" y="8.6" width="1.8" height="2" fill="#4a4a4a"/></svg>
</div>
</body></html>
